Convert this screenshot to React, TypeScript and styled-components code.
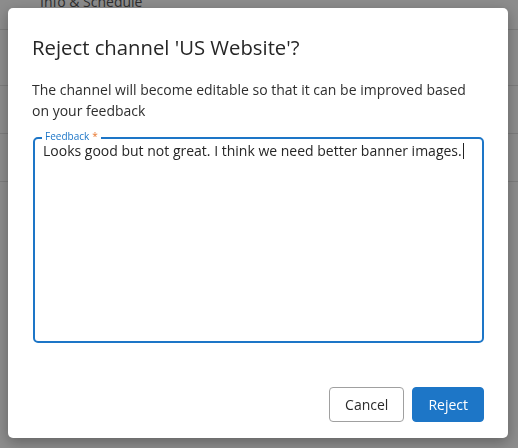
import React from "react";
import styled, { createGlobalStyle } from "styled-components";

const GlobalStyle = createGlobalStyle`
  html, body {
    margin: 0;
    padding: 0;
    width: 518px;
    height: 448px;
    overflow: hidden;
    background: #ffffff;
    font-family: "Open Sans", "Liberation Sans", sans-serif;
  }
  * { box-sizing: border-box; }
`;

const Page = styled.div`
  width: 518px;
  height: 448px;
  display: flex;
  flex-direction: column;
`;

const TabBar = styled.div`
  margin-top: -9px;
  height: 39px;
  flex: none;
  padding-left: 40px;
  border-bottom: 1px solid #e2e2e2;
  font-size: 14px;
  line-height: 21px;
  color: #555555;
`;

const ListRow = styled.div<{ $h: number }>`
  height: ${(p) => p.$h}px;
  flex: none;
  border-bottom: 1px solid #e2e2e2;
`;

const Backdrop = styled.div`
  position: fixed;
  inset: 0;
  background: rgba(0, 0, 0, 0.45);
  padding: 8px;
  display: flex;
  justify-content: flex-start;
  align-items: flex-start;
`;

const Dialog = styled.div`
  width: 500px;
  background: #ffffff;
  border-radius: 5px;
  box-shadow: 0 4px 14px rgba(0, 0, 0, 0.3);
  padding: 24px 24px 16px 25px;
  display: flex;
  flex-direction: column;
`;

const Title = styled.h2`
  margin: 0 0 0 -1px;
  font-size: 20.3px;
  line-height: 30px;
  font-weight: 400;
  color: #262626;
`;

const Description = styled.p`
  margin: 17px 0 0 -1px;
  font-size: 14px;
  line-height: 21px;
  color: #2e2e2e;
`;

const Field = styled.div`
  position: relative;
  margin-top: 16px;
  height: 206px;
  border: 2px solid #1d76c7;
  border-radius: 5px;
`;

const FieldLabel = styled.span`
  position: absolute;
  left: 7px;
  top: -8px;
  padding: 0 3px;
  background: #ffffff;
  font-size: 10px;
  line-height: 10px;
  color: #1d76c7;
`;

const Required = styled.span`
  color: #e8772e;
  margin-left: 3px;
`;

const Input = styled.div`
  padding: 3px 8px 0 8px;
  font-size: 14px;
  line-height: 18px;
  color: #262626;
  white-space: pre-wrap;
`;

const Caret = styled.span`
  display: inline-block;
  width: 1px;
  height: 16px;
  background: #222;
  vertical-align: -3px;
  margin-left: 1px;
`;

const Footer = styled.div`
  margin-top: 44px;
  display: flex;
  justify-content: flex-end;
  gap: 8px;
`;

const Button = styled.button<{ $primary?: boolean }>`
  height: 35px;
  padding: 0 15px;
  border-radius: 4px;
  font-family: "Open Sans", "Liberation Sans", sans-serif;
  font-size: 14px;
  border: 1px solid ${(p) => (p.$primary ? "#1d76c7" : "#a0a0a0")};
  background: ${(p) => (p.$primary ? "#1d76c7" : "#ffffff")};
  color: ${(p) => (p.$primary ? "#ffffff" : "#2b2b2b")};
  cursor: pointer;
`;

export default function App() {
  return (
    <>
      <GlobalStyle />
      <Page>
        <TabBar>Info &amp; Schedule</TabBar>
        <ListRow $h={56} />
        <ListRow $h={48} />
        <ListRow $h={48} />
      </Page>
      <Backdrop>
        <Dialog role="dialog" aria-labelledby="reject-title">
          <Title id="reject-title">Reject channel 'US Website'?</Title>
          <Description>
            The channel will become editable so that it can be improved based
            on your feedback
          </Description>
          <Field>
            <FieldLabel>
              Feedback<Required>*</Required>
            </FieldLabel>
            <Input role="textbox" aria-multiline="true">
              Looks good but not great. I think we need better banner images.
              <Caret />
            </Input>
          </Field>
          <Footer>
            <Button>Cancel</Button>
            <Button $primary>Reject</Button>
          </Footer>
        </Dialog>
      </Backdrop>
    </>
  );
}
